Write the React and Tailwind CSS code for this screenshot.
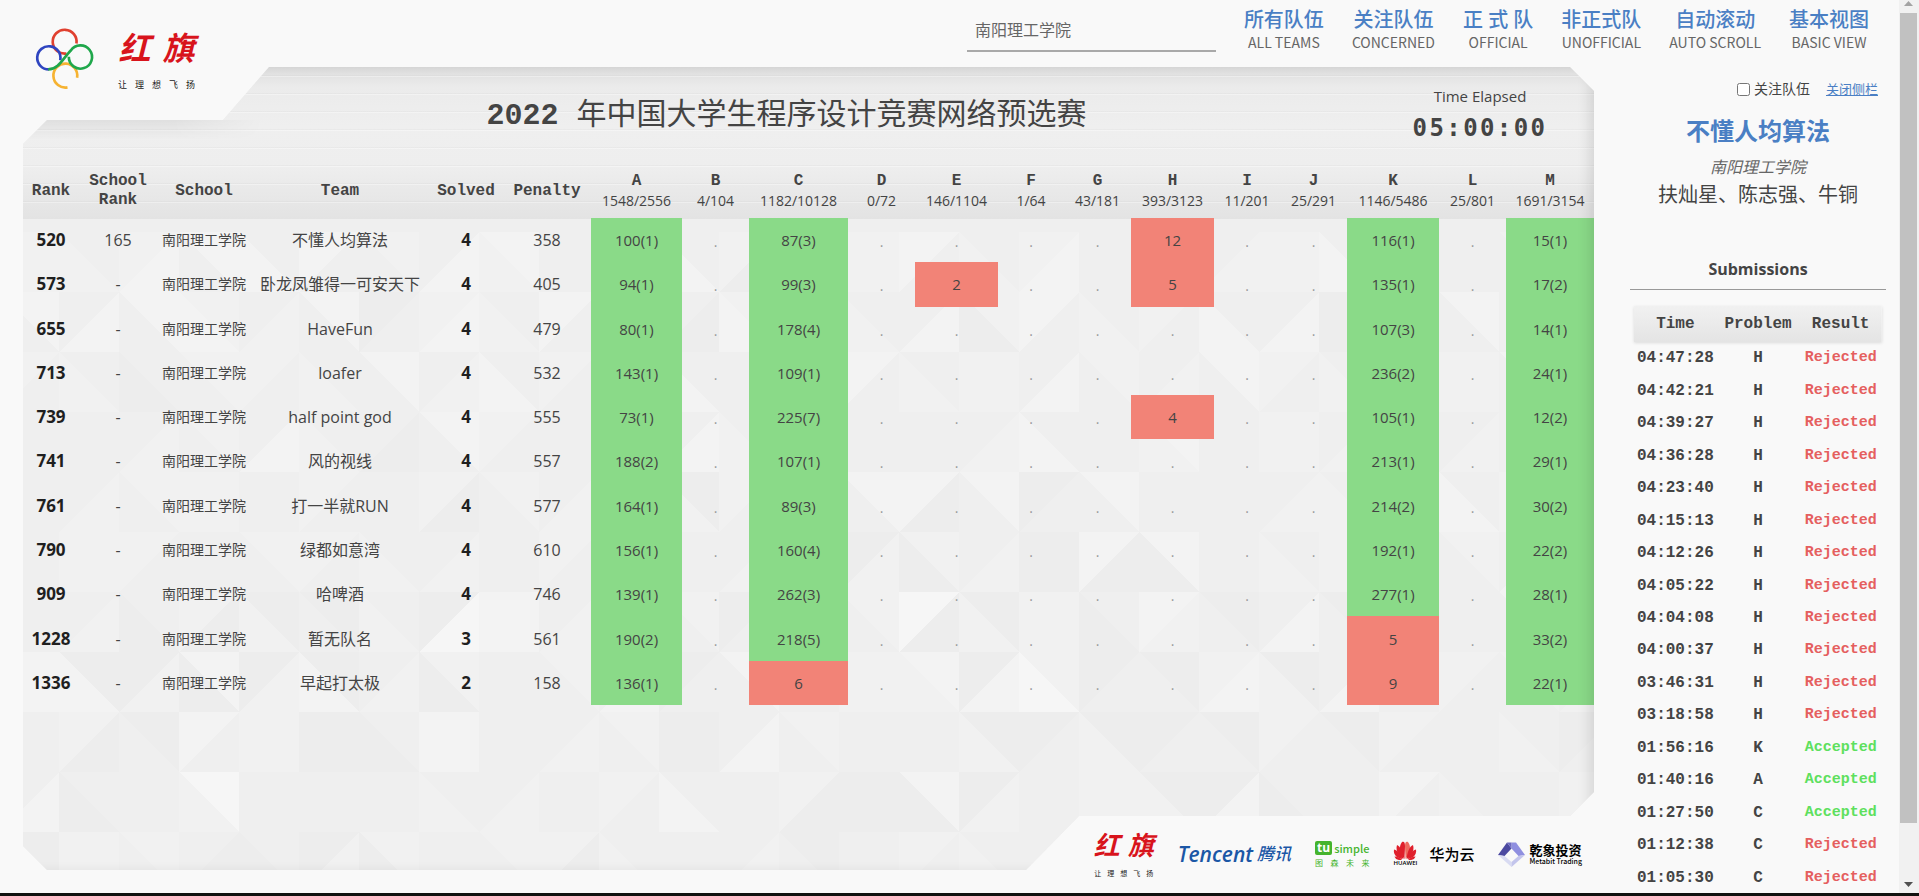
const NAV = [
  { zh: '所有队伍', en: 'ALL TEAMS' },
  { zh: '关注队伍', en: 'CONCERNED' },
  { zh: '正 式 队', en: 'OFFICIAL' },
  { zh: '非正式队', en: 'UNOFFICIAL' },
  { zh: '自动滚动', en: 'AUTO SCROLL' },
  { zh: '基本视图', en: 'BASIC VIEW' },
];

const PROBLEMS = [
  ['A', '1548/2556'], ['B', '4/104'], ['C', '1182/10128'], ['D', '0/72'], ['E', '146/1104'],
  ['F', '1/64'], ['G', '43/181'], ['H', '393/3123'], ['I', '11/201'], ['J', '25/291'],
  ['K', '1146/5486'], ['L', '25/801'], ['M', '1691/3154'],
];

const COLS = [
  'w-[56px]', 'w-[78px]', 'w-[94px]', 'w-[178px]', 'w-[74px]', 'w-[88px]', 'w-[91px]',
  'w-[67px]', 'w-[99px]', 'w-[67px]', 'w-[83px]', 'w-[66px]', 'w-[67px]', 'w-[83px]',
  'w-[66px]', 'w-[67px]', 'w-[92px]', 'w-[67px]', 'w-[88px]',
];

const SCHOOL = '南阳理工学院';

const TEAMS = [
  { rank: 520, sr: '165', team: '不懂人均算法', solved: 4, penalty: 358, r: { A: '100(1)', C: '87(3)', H: '12', K: '116(1)', M: '15(1)' } },
  { rank: 573, sr: '-', team: '卧龙凤雏得一可安天下', solved: 4, penalty: 405, r: { A: '94(1)', C: '99(3)', E: '2', H: '5', K: '135(1)', M: '17(2)' } },
  { rank: 655, sr: '-', team: 'HaveFun', solved: 4, penalty: 479, r: { A: '80(1)', C: '178(4)', K: '107(3)', M: '14(1)' } },
  { rank: 713, sr: '-', team: 'loafer', solved: 4, penalty: 532, r: { A: '143(1)', C: '109(1)', K: '236(2)', M: '24(1)' } },
  { rank: 739, sr: '-', team: 'half point god', solved: 4, penalty: 555, r: { A: '73(1)', C: '225(7)', H: '4', K: '105(1)', M: '12(2)' } },
  { rank: 741, sr: '-', team: '风的视线', solved: 4, penalty: 557, r: { A: '188(2)', C: '107(1)', K: '213(1)', M: '29(1)' } },
  { rank: 761, sr: '-', team: '打一半就RUN', solved: 4, penalty: 577, r: { A: '164(1)', C: '89(3)', K: '214(2)', M: '30(2)' } },
  { rank: 790, sr: '-', team: '绿都如意湾', solved: 4, penalty: 610, r: { A: '156(1)', C: '160(4)', K: '192(1)', M: '22(2)' } },
  { rank: 909, sr: '-', team: '哈啤酒', solved: 4, penalty: 746, r: { A: '139(1)', C: '262(3)', K: '277(1)', M: '28(1)' } },
  { rank: 1228, sr: '-', team: '暂无队名', solved: 3, penalty: 561, r: { A: '190(2)', C: '218(5)', K: '5', M: '33(2)' } },
  { rank: 1336, sr: '-', team: '早起打太极', solved: 2, penalty: 158, r: { A: '136(1)', C: '6', K: '9', M: '22(1)' } },
];

const SUBMISSIONS = [
  ['04:47:28', 'H', false], ['04:42:21', 'H', false], ['04:39:27', 'H', false], ['04:36:28', 'H', false],
  ['04:23:40', 'H', false], ['04:15:13', 'H', false], ['04:12:26', 'H', false], ['04:05:22', 'H', false],
  ['04:04:08', 'H', false], ['04:00:37', 'H', false], ['03:46:31', 'H', false], ['03:18:58', 'H', false],
  ['01:56:16', 'K', true], ['01:40:16', 'A', true], ['01:27:50', 'C', true], ['01:12:38', 'C', false],
  ['01:05:30', 'C', false],
];

/* Each tile is a flat tone ("2") or two tones split by a diagonal: "3/0" is
   upper-left / lower-right, "3b0" is upper-right \ lower-left. */
const TONES = ['#ededed', '#efefef', '#f1f1f1', '#f3f3f3', '#f6f6f6'];
const TILES = [
  '2 1b2 2/3 3b1 1b3 3/1 2b1 1/3 3b2 1 2/1 1b3 2/0 1b2 2 3/1 1b2 2/3 1 3b1 1/2 2 1b3 2/1 1 2b1 1/2',
  '3b1 1/3 3b1 2b3 1/2 3b1 0/1 2/3 1b2 3/1 2 1/0 2b3 1/3 1b2 1/3 2b0 3/1 1b2 2/1 1b3 1/3 0 2/1 3b1 1 2/0',
  '2/1 1b2 1b0 2b1 2/1 1b2 3b1 1/2 1b3 2/1 0/2 1b3 1 2b1 3/1 1b2 2 1/3 2b1 1/2 3b1 2/1 1b2 1/2 2 3b1 1/2',
  '1 1 1/2 2b1 1/3 1b2 1/0 3b1 2/1 1 3b2 1/3 1b2 2/1 1 1b1 1/2 1b3 1 3b2 1 2b2 1/2 3b1 1/2 1 2b0',
  '1 1/2 2b1 2 1 2/1 1 2/0 2b1 1/2 1 0b2 2/1 1/3 3b1 3/0 3b1 0/1 3b1 1 1 1/2 1b2 2/1 1b3 2 1/2',
  '1b1 2 2/1 1 2b1 2/1 1b2 1/2 1b1 2/1 3b1 1 1/2 1b0 0/2 2b0 1/2 0 3/0 3b0 1 1b2 2 1/0 2b1 1/3 1',
  '1b1 1/2 1b0 2/0 0b2 0b1 1b2 0/4 3 1/2 1 2b1 0/1 1/2 2b1 4/0 0b2 2 1b0 3/2 0b1 1/3 0b1 2/1 1 3b1 2/1',
  '3 0b3 0/2 3b0 0/2 0b3 1/2 2b0 1 2b1 1/3 0/1 3b1 1 2 3b2 0/3 2b4 0/1 0b1 2/3 0b2 1/3 1 2/1 2b1 1/2',
  '1 2/0 0b1 3/1 2 0 1b0 3 1 1/2 2b1 0 1/3 2b1 1 1 0b2 0/1 0b2 0/1 0b1 2/1 0b1 2/1 1 1b2 0/1',
  '1/3 1b0 1 4b2 1 1 1 1b2 1/2 1 2/1 1b3 1 2/0 0 3b0 0/2 1 2 0b2 0/3 1b0 1 3/1 1b2 1 2/1',
  '0 2 2b1 1/0 1b0 0/2 2b0 1 2b1 2/0 1b2 1 1/2 0b1 1 2/1 1b2 1 1 2 1 0 1 2 1 1 1',
];

function Facets() {
  const shapes = [];
  TILES.forEach((row, j) => {
    row.split(' ').forEach((t, i) => {
      const x = i * 60 - 24;
      const y = j * 60 + 165;
      const a = TONES[+t[0]];
      if (t.length === 1) {
        shapes.push(<rect key={`${j}-${i}`} x={x} y={y} width="60" height="60" fill={a} />);
        return;
      }
      const b = TONES[+t[2]];
      const first = t[1] === '/' ? `M${x} ${y}h60l-60 60z` : `M${x} ${y}h60v60z`;
      shapes.push(
        <g key={`${j}-${i}`}>
          <rect x={x} y={y} width="60" height="60" fill={b} />
          <path d={first} fill={a} />
        </g>
      );
    });
  });
  return (
    <svg className="absolute inset-0 h-full w-full" shapeRendering="crispEdges" aria-hidden="true">
      {shapes}
    </svg>
  );
}

function RingsLogo() {
  return (
    <svg viewBox="100 78 190 190" className="size-[63px]" fill="none" strokeWidth="8" aria-hidden="true">
      <path d="M231 128A36 36 0 1 0 201 158" stroke="#e0402f" />
      <path d="M233 231A36 36 0 1 0 204 260" stroke="#f6b332" />
      <path d="M182 178A35 35 0 1 0 148 206" stroke="#2f45c0" />
      <path d="M146 206C178 206 192 170 214 149A35 35 0 1 1 208 168" stroke="#1fa74b" />
    </svg>
  );
}

function Hongqi({ small }) {
  return (
    <div className="flex flex-col items-center">
      <div
        className={
          small
            ? 'flex gap-2 text-[26px] leading-8 font-bold text-[#d8141c] italic'
            : 'flex gap-3 text-[32px] leading-[42px] font-bold text-[#d8141c] italic'
        }
      >
        <span>红</span>
        <span>旗</span>
      </div>
      <div
        className={
          small
            ? 'mt-2 flex gap-[6px] text-[7px] leading-[10px] text-[#222]'
            : 'mt-[10px] flex gap-2 text-[9px] leading-3 text-[#222]'
        }
      >
        {['让', '理', '想', '飞', '扬'].map((c) => (
          <span key={c}>{c}</span>
        ))}
      </div>
    </div>
  );
}

function Petals() {
  return (
    <svg viewBox="0 0 48 38" className="h-[19px] w-6" fill="#e0202c" aria-hidden="true">
      <path d="M23 36C15 25 10 12 18 2c5-2 6 3 6 8 0 9-1 18-1 26z" />
      <path d="M25 36C33 25 38 12 30 2c-5-2-6 3-6 8 0 9 1 18 1 26z" fill="#ee6a5f" />
      <path d="M21 36C13 31 4 20 8 8c7 2 12 16 13 28z" />
      <path d="M27 36c8-5 17-16 13-28-7 2-12 16-13 28z" />
      <path d="M19 36C9 35 0 28 2 17c8 2 14 11 17 19z" />
      <path d="M29 36c10-1 19-8 17-19-8 2-14 11-17 19z" />
      <path d="M18 38C11 39 5 37 3 31c6 0 11 3 15 7z" />
      <path d="M30 38c7 1 13-1 15-7-6 0-11 3-15 7z" />
    </svg>
  );
}

function Sponsors() {
  return (
    <div className="absolute right-3 bottom-[-14px] flex h-[60px] items-center text-black">
      <Hongqi small />
      <div className="ml-6 flex items-center gap-1 text-[#1b57a6]">
        <span className="font-['Open_Sans'] text-[21px] leading-6 font-semibold italic">Tencent</span>
        <span className="text-[17px] leading-6 font-medium italic">腾讯</span>
      </div>
      <div className="ml-6 flex flex-col text-[#45b42d]">
        <div className="flex items-center gap-[2px] text-[12px] leading-[14px]">
          <span className="rounded-[2px] bg-[#45b42d] px-[2px] font-bold text-white">tu</span>
          <span className="font-['Noto_Sans_CJK_SC'] text-[11px] font-medium">simple</span>
        </div>
        <div className="mt-[3px] flex justify-between text-[8px] leading-[9px]">
          <span>图</span><span>森</span><span>未</span><span>来</span>
        </div>
      </div>
      <div className="ml-6 flex flex-col items-center">
        <Petals />
        <span className="font-['Open_Sans'] text-[6px] leading-[7px] font-semibold">HUAWEI</span>
      </div>
      <span className="ml-3 text-[15px] leading-5 font-medium">华为云</span>
      <svg viewBox="0 0 54 50" className="ml-6 h-[25px] w-[27px]" aria-hidden="true">
        <path d="M0 26L18 1l9 12-14 15z" fill="#4b49a0" />
        <path d="M27 1h9l18 25-13 2-14-15z" fill="#8f8fe0" />
        <path d="M18 1h9v12z" fill="#6c6ac0" />
        <path d="M0 26l13 2 14 12v10z" fill="#d9dbf2" />
        <path d="M41 28l13-2-27 24V40z" fill="#c3c5ec" />
      </svg>
      <div className="ml-1 flex flex-col">
        <span className="text-[13px] leading-[14px] font-bold">乾象投资</span>
        <span className="font-['Noto_Sans_CJK_SC'] text-[7px] leading-[9px] font-medium">Metabit Trading</span>
      </div>
    </div>
  );
}

function TopBar() {
  return (
    <header className="relative z-10 flex h-[67px] items-start">
      <div className="mt-[27px] ml-[33px] flex gap-[22px]">
        <RingsLogo />
        <Hongqi />
      </div>
      <div className="ml-auto flex items-start">
        <input
          type="text"
          aria-label="搜索队伍"
          defaultValue={SCHOOL}
          className="mt-2 h-11 w-[249px] border-b-2 border-[#a9a9a9] bg-transparent px-2 text-[16px] text-[#666] outline-none"
        />
        <nav className="mr-[30px] ml-7 flex gap-7 pt-2">
          {NAV.map((n) => (
            <button key={n.en} type="button" className="flex flex-col items-center whitespace-nowrap">
              <span className="text-[20px] leading-6 font-medium text-[#4a7fc4]">{n.zh}</span>
              <span className="font-['Noto_Sans_CJK_SC',sans-serif] text-[14px] leading-5 text-[#666]">{n.en}</span>
            </button>
          ))}
        </nav>
      </div>
    </header>
  );
}

function ResultCell({ value }) {
  if (!value) return <td className="pt-1 text-[#999]">.</td>;
  return <td className={value.includes('(') ? 'bg-[#8ada88] text-[15px]' : 'bg-[#f28377] text-[15px]'}>{value}</td>;
}

function Board() {
  return (
    <main className="relative mb-[23px] ml-[23px] min-w-0 flex-1">
      <div className="relative h-full overflow-hidden bg-[#efefef] [clip-path:polygon(246px_0,calc(100%_-_24px)_0,100%_24px,100%_calc(100%_-_78px),calc(100%_-_24px)_calc(100%_-_54px),calc(100%_-_515px)_calc(100%_-_54px),calc(100%_-_568px)_100%,24px_100%,0_calc(100%_-_24px),0_77px,24px_53px,200px_53px)]">
        <Facets />
        <div className="absolute inset-x-0 top-0 h-[152px] bg-[linear-gradient(#dddddd,#ebebeb_20px,#efefef_60px,#eeeeee_100px,#e3e3e3)]" />
        <div className="absolute inset-x-0 top-0 h-[152px] bg-[repeating-linear-gradient(transparent_0_8px,rgba(0,0,0,0.025)_8px_9px,rgba(255,255,255,0.35)_9px_10px,transparent_10px_18px)]" />
        <div className="absolute top-[53px] left-0 h-5 w-[240px] bg-[linear-gradient(rgba(0,0,0,0.06),transparent)] [mask-image:linear-gradient(to_right,black_150px,transparent)]" />
        <div className="relative">
          <div className="flex h-[93px] items-center pt-1 pl-[184px]">
            <h1 className="flex-1 text-center font-['Liberation_Mono','Noto_Sans_CJK_SC',monospace] text-[30px] leading-9 text-[#444]">
              <span className="font-bold">2022 </span>年中国大学生程序设计竞赛网络预选赛
            </h1>
            <div className="w-[228px] pb-1 text-center">
              <div className="text-[15px] leading-6">Time Elapsed</div>
              <div className="mt-1 font-['DejaVu_Sans_Mono',monospace] text-[24px] leading-8 font-bold tracking-widest">05:00:00</div>
            </div>
          </div>
          <table className="h-[545px] w-full table-fixed border-collapse text-center text-[14px] leading-5">
            <colgroup>
              {COLS.map((c, i) => (
                <col key={i} className={c} />
              ))}
            </colgroup>
            <thead className="font-['Liberation_Mono',monospace] text-[16px] leading-[19px]">
              <tr className="h-[58px] [&>th]:pt-1">
                <th>Rank</th>
                <th>School<br />Rank</th>
                <th>School</th>
                <th>Team</th>
                <th>Solved</th>
                <th>Penalty</th>
                {PROBLEMS.map(([p, c]) => (
                  <th key={p}>
                    {p}
                    <div className="font-['Open_Sans',sans-serif] text-[14px] font-normal">{c}</div>
                  </th>
                ))}
              </tr>
            </thead>
            <tbody>
              {TEAMS.map((t) => (
                <tr key={t.rank}>
                  <td className="text-[17px] font-bold text-[#1f1f1f]">{t.rank}</td>
                  <td className="text-[16px]">{t.sr}</td>
                  <td className="whitespace-nowrap">{SCHOOL}</td>
                  <td className="text-[16px] whitespace-nowrap">{t.team}</td>
                  <td className="text-[17px] font-bold text-[#1f1f1f]">{t.solved}</td>
                  <td className="text-[16px]">{t.penalty}</td>
                  {PROBLEMS.map(([p]) => (
                    <ResultCell key={p} value={t.r[p]} />
                  ))}
                </tr>
              ))}
            </tbody>
          </table>
        </div>
        <div className="pointer-events-none absolute inset-0 shadow-[inset_-8px_0_14px_-4px_rgba(0,0,0,0.12)]" />
      </div>
      <Sponsors />
    </main>
  );
}

function SidePanel() {
  return (
    <aside className="w-[305px] shrink-0 overflow-hidden pt-3 pr-[13px] pl-9">
      <div className="flex items-center justify-end pr-2 leading-5">
        <label className="flex items-center gap-1 text-[14px]">
          <input type="checkbox" className="size-[13px]" />
          关注队伍
        </label>
        <a href="#close" className="ml-4 text-[13px] text-[#4a7fc4] underline">关闭侧栏</a>
      </div>
      <h2 className="mt-[14px] text-center text-[24px] leading-9 font-bold text-[#4a7fc4]">不懂人均算法</h2>
      <p className="mt-[6px] text-center text-[16px] leading-6 text-[#666] italic">{SCHOOL}</p>
      <p className="text-center text-[20px] leading-8">扶灿星、陈志强、牛铜</p>
      <h3 className="mt-11 border-b border-[#999] pb-[6px] text-center text-[16px] leading-7 font-bold">Submissions</h3>
      <table className="mx-1 mt-4 h-[588px] w-[248px] table-fixed border-collapse text-center font-['Liberation_Mono',monospace] text-[16px] leading-5 font-bold">
        <thead>
          <tr className="h-9 bg-[linear-gradient(#f1f1f1,#e4e4e4)] shadow-[0_1px_3px_rgba(0,0,0,0.12)]">
            <th>Time</th>
            <th>Problem</th>
            <th>Result</th>
          </tr>
        </thead>
        <tbody>
          {SUBMISSIONS.map(([time, problem, ok]) => (
            <tr key={time}>
              <td>{time}</td>
              <td>{problem}</td>
              <td className={ok ? 'text-[15px] text-[#5ee05e]' : 'text-[15px] text-[#e55f5f]'}>{ok ? 'Accepted' : 'Rejected'}</td>
            </tr>
          ))}
        </tbody>
      </table>
    </aside>
  );
}

function ScrollTrack() {
  return (
    <div className="flex w-5 shrink-0 flex-col bg-[#f1f1f1] px-[1px]" aria-hidden="true">
      <svg viewBox="0 0 17 13" className="h-[13px] w-[17px]">
        <path d="M4 6h9L8.500 1z" fill="#a3a3a3" />
      </svg>
      <div className="w-[17px] flex-[810] bg-[#c1c1c1]" />
      <div className="flex-[53]" />
      <svg viewBox="0 0 17 17" className="h-[17px] w-[17px]">
        <path d="M4 6h9l-4.500 5z" fill="#505050" />
      </svg>
    </div>
  );
}

export default function App() {
  return (
    <div className="flex h-screen flex-col overflow-hidden bg-[#f9f9f9] font-['Open_Sans','Noto_Sans_CJK_SC',sans-serif] text-[#444]">
      <div className="flex min-h-0 flex-1">
        <div className="flex min-w-0 flex-1 flex-col">
          <TopBar />
          <div className="flex min-h-0 flex-1">
            <Board />
            <SidePanel />
          </div>
        </div>
        <ScrollTrack />
      </div>
      <div className="h-[3px] shrink-0 bg-[#111310]" />
    </div>
  );
}
